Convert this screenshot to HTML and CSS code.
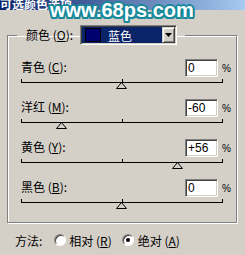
FILE: index.html
```html
<!DOCTYPE html>
<html lang="zh-CN">
<head>
  <meta charset="UTF-8" />
  <title>可选颜色选项</title>
  <link rel="stylesheet" href="styles.css">
</head>
<body>
  <div class="titlebar"><h1>可选颜色选项</h1></div>
  <div class="watermark">www.68ps.com</div>

  <div class="dialog">
    <fieldset class="colors">
      <legend>
        <span class="legend-inner">
          <label>颜色 (<u>O</u>):</label>
          <span class="select">
            <span class="select-value"><span class="swatch"></span>蓝色</span>
            <span class="select-btn">
              <svg width="7" height="4" viewBox="0 0 7 4"><polygon points="0,0 7,0 3.5,4" fill="#000"/></svg>
            </span>
          </span>
        </span>
      </legend>

      <div class="adj">
        <div class="adj-head">
          <label>青色 (<u>C</u>):</label>
          <input type="text" value="0" />
          <span class="pct">%</span>
        </div>
        <div class="track">
          <svg class="thumb" style="left: 50%" width="11" height="7" viewBox="0 0 11 7"><polygon points="5.5,0.5 0.5,6.5 10.5,6.5" fill="#d4d0c8" stroke="#000"/></svg>
        </div>
      </div>

      <div class="adj">
        <div class="adj-head">
          <label>洋红 (<u>M</u>):</label>
          <input type="text" value="-60" />
          <span class="pct">%</span>
        </div>
        <div class="track">
          <svg class="thumb" style="left: 20%" width="11" height="7" viewBox="0 0 11 7"><polygon points="5.5,0.5 0.5,6.5 10.5,6.5" fill="#d4d0c8" stroke="#000"/></svg>
        </div>
      </div>

      <div class="adj">
        <div class="adj-head">
          <label>黄色 (<u>Y</u>):</label>
          <input type="text" value="+56" />
          <span class="pct">%</span>
        </div>
        <div class="track">
          <svg class="thumb" style="left: 78%" width="11" height="7" viewBox="0 0 11 7"><polygon points="5.5,0.5 0.5,6.5 10.5,6.5" fill="#d4d0c8" stroke="#000"/></svg>
        </div>
      </div>

      <div class="adj">
        <div class="adj-head">
          <label>黑色 (<u>B</u>):</label>
          <input type="text" value="0" />
          <span class="pct">%</span>
        </div>
        <div class="track">
          <svg class="thumb" style="left: 50%" width="11" height="7" viewBox="0 0 11 7"><polygon points="5.5,0.5 0.5,6.5 10.5,6.5" fill="#d4d0c8" stroke="#000"/></svg>
        </div>
      </div>
    </fieldset>

    <div class="method">
      <span class="method-label">方法:</span>
      <span class="radio"></span>
      <span class="radio-text">相对 (<u>R</u>)</span>
      <span class="radio checked"></span>
      <span class="radio-text">绝对 (<u>A</u>)</span>
    </div>
  </div>
</body>
</html>
```

FILE: styles.css
```css
:root {
  --face: #d4d0c8;
  --shadow: #808080;
  --dark: #404040;
  --light: #ffffff;
  --navy: #0a246a;
}

* {
  box-sizing: border-box;
}

body {
  margin: 0;
  width: 245px;
  height: 255px;
  overflow: hidden;
  position: relative;
  background: var(--face);
  color: #000;
  font: 12px "Noto Sans CJK SC", sans-serif;
}

.titlebar {
  height: 10px;
  overflow: hidden;
  background: linear-gradient(to right, var(--navy), #a6caf0);
}

.titlebar h1 {
  margin: -3px 0 0 0;
  font-size: 12px;
  line-height: 14px;
  font-weight: bold;
  color: #fff;
}

.watermark {
  position: absolute;
  left: 50px;
  top: 0;
  font: bold 20px/20px "Liberation Sans", sans-serif;
  color: #fff;
  text-shadow:
    2px 0 #16899a, -2px 0 #16899a, 0 2px #16899a, 0 -2px #16899a,
    1.5px 1.5px #16899a, -1.5px 1.5px #16899a, 1.5px -1.5px #16899a, -1.5px -1.5px #16899a;
}

.dialog {
  padding: 15px 8px 0 7px;
}

.colors {
  margin: 0;
  padding: 14px 7px 3px 13px;
  border: 1px solid var(--shadow);
  box-shadow: inset 1px 1px var(--light), 1px 1px var(--light);
  min-inline-size: 0;
}

.colors legend {
  margin-left: -4px;
  padding: 0 8px 0 9px;
}

.legend-inner {
  display: flex;
  align-items: center;
  gap: 7px;
}

label {
  line-height: 14px;
}

.select {
  display: flex;
  width: 97px;
  height: 20px;
  padding: 1px;
  background: var(--light);
  border: 1px solid;
  border-color: var(--shadow) var(--light) var(--light) var(--shadow);
  box-shadow: inset 1px 1px var(--dark), inset -1px -1px var(--face);
}

.select-value {
  flex: 1;
  display: flex;
  align-items: center;
  gap: 7px;
  padding-left: 3px;
  background: var(--navy);
  color: #fff;
}

.swatch {
  width: 16px;
  height: 14px;
  border: 1px solid #000;
  background: #000070;
}

.select-btn {
  width: 13px;
  display: flex;
  align-items: center;
  justify-content: center;
  background: var(--face);
  border: 1px solid;
  border-color: var(--face) var(--dark) var(--dark) var(--face);
  box-shadow: inset 1px 1px var(--light), inset -1px -1px var(--shadow);
}

.adj {
  height: 40px;
}

.adj-head {
  display: flex;
  align-items: center;
  height: 18px;
}

.adj-head label {
  flex: 1;
  padding-bottom: 3px;
}

.adj-head input {
  width: 33px;
  height: 18px;
  margin: 0;
  padding: 0 2px;
  font: 12px "Liberation Sans", sans-serif;
  color: #000;
  background: var(--light);
  border: 1px solid;
  border-color: var(--shadow) var(--light) var(--light) var(--shadow);
  box-shadow: inset 1px 1px var(--dark), inset -1px -1px var(--face);
  outline: none;
}

.pct {
  width: 7px;
  margin-left: 4px;
  font: 10px "Liberation Sans", sans-serif;
}

.track {
  position: relative;
  width: 202px;
  height: 4px;
  margin-top: 2px;
  border: 1px solid #000;
  border-top: 0;
  background: linear-gradient(#000, #000) center / 1px 100% no-repeat;
}

.thumb {
  position: absolute;
  top: 3px;
  margin-left: -6px;
  display: block;
}

.method {
  display: flex;
  align-items: center;
  height: 16px;
  margin-top: 9px;
  padding-left: 8px;
}

.method-label {
  margin-right: 12px;
}

.radio {
  width: 12px;
  height: 12px;
  display: grid;
  place-items: center;
  border-radius: 50%;
  background: var(--light);
  border: 1px solid;
  border-color: var(--shadow) var(--light) var(--light) var(--shadow);
  box-shadow: inset 1px 1px var(--dark);
}

.radio.checked::after {
  content: "";
  width: 4px;
  height: 4px;
  border-radius: 50%;
  background: #000;
}

.radio-text {
  margin: 0 10px 0 3px;
}

.radio.checked + .radio-text {
  margin-left: 4px;
}
```
